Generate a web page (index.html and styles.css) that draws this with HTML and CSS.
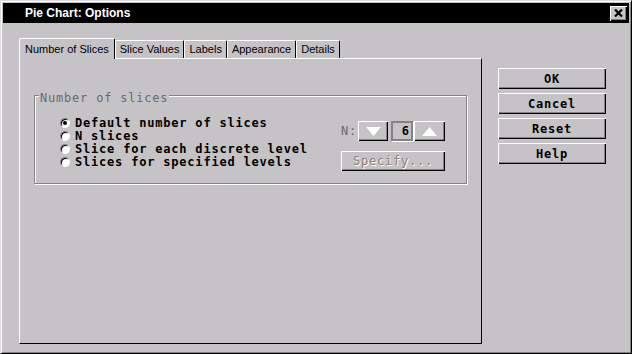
FILE: index.html
```html
<!DOCTYPE html>
<html>
<head>
<meta charset="utf-8">
<link rel="stylesheet" href="styles.css">
</head>
<body>
<div class="window">
  <div class="titlebar">
    <span class="title">Pie Chart: Options</span>
    <button class="close"><svg width="9" height="8" viewBox="0 0 9 8"><path d="M1 0.5 L8 7.5 M8 0.5 L1 7.5" stroke="#000" stroke-width="2.2"/></svg></button>
  </div>
  <div class="content">
    <div class="tabs-area">
      <div class="tabs">
        <div class="tab active">Number of Slices</div>
        <div class="tab">Slice Values</div>
        <div class="tab">Labels</div>
        <div class="tab">Appearance</div>
        <div class="tab">Details</div>
      </div>
      <div class="panel">
        <div class="group">
          <div class="group-title">Number of slices</div>
          <div class="radios">
            <div class="radio"><span class="dot checked"></span>Default number of slices</div>
            <div class="radio"><span class="dot"></span>N slices</div>
            <div class="radio"><span class="dot"></span>Slice for each discrete level</div>
            <div class="radio"><span class="dot"></span>Slices for specified levels</div>
          </div>
          <div class="controls">
            <div class="spin-row">
              <span class="n-label">N:</span>
              <button class="arrow down"><svg width="15" height="9" viewBox="0 0 15 9"><polygon points="0,0 15,0 7.5,9" fill="#fff"/></svg></button>
              <span class="field">6</span>
              <button class="arrow up"><svg width="15" height="9" viewBox="0 0 15 9"><polygon points="0,9 15,9 7.5,0" fill="#fff"/></svg></button>
            </div>
            <button class="specify">Specify...</button>
          </div>
        </div>
      </div>
    </div>
    <div class="actions">
      <button class="btn">OK</button>
      <button class="btn">Cancel</button>
      <button class="btn">Reset</button>
      <button class="btn">Help</button>
    </div>
  </div>
</div>
</body>
</html>
```
FILE: styles.css
```css
html, body {
  margin: 0;
  background: #c6c3c6;
}
.window {
  width: 632px;
  height: 354px;
  box-sizing: border-box;
  border: 1px solid;
  border-color: #dedbde #000 #000 #dedbde;
  box-shadow: inset 1px 1px #fff, inset -1px -1px #848284;
  padding: 2px;
  display: flex;
  flex-direction: column;
  background: #c6c3c6;
  font-family: "DejaVu Sans Mono", monospace;
}
.titlebar {
  height: 20px;
  flex: none;
  background: #000;
  display: flex;
  align-items: center;
  justify-content: space-between;
  padding: 0 2px 0 22px;
}
.title {
  color: #fff;
  font: bold 12px "Liberation Sans", Arial, sans-serif;
}
.close {
  width: 17px;
  height: 15px;
  padding: 0;
  border: 0;
  background: #c6c3c6;
  box-shadow: inset 1px 1px #fff, inset -1px -1px #000, inset -2px -2px #848284;
  display: flex;
  align-items: center;
  justify-content: center;
}
.content {
  display: flex;
  align-items: flex-start;
  flex: 1;
  padding: 15px 0 0 16px;
}
.tabs-area {
  width: 463px;
  display: flex;
  flex-direction: column;
}
.tabs {
  display: flex;
  height: 20px;
  align-items: flex-end;
}
.tab {
  height: 18px;
  box-sizing: border-box;
  padding: 0 4px;
  border-top: 1px solid #fff;
  border-left: 1px solid #fff;
  border-right: 1px solid #000;
  border-radius: 2px 2px 0 0;
  font: 11px "Liberation Sans", Arial, sans-serif;
  line-height: 16px;
  color: #000;
  white-space: nowrap;
}
.tab.active {
  height: 21px;
  margin-bottom: -1px;
  padding: 2px 5px 0 5px;
  position: relative;
  z-index: 1;
  background: #c6c3c6;
}
.panel {
  height: 286px;
  box-sizing: border-box;
  border: 1px solid;
  border-color: #fff #000 #000 #fff;
  padding: 36px 14px 0 14px;
}
.group {
  position: relative;
  width: 433px;
  height: 89px;
  box-sizing: border-box;
  border: 1px solid #848284;
  box-shadow: 1px 1px #fff, inset 1px 1px #fff;
  display: flex;
  justify-content: space-between;
  padding: 20px 21px 0 25px;
}
.group-title {
  position: absolute;
  top: -5px;
  left: 4px;
  padding: 0 1px;
  background: #c6c3c6;
  color: #6b696b;
  font-size: 12px;
  letter-spacing: 0.8px;
  line-height: 14px;
}
.radios {
  display: flex;
  flex-direction: column;
}
.radio {
  display: flex;
  align-items: center;
  height: 13px;
  font-weight: bold;
  font-size: 12px;
  letter-spacing: 0.8px;
  color: #000;
  white-space: nowrap;
}
.dot {
  width: 10px;
  height: 10px;
  box-sizing: border-box;
  border-radius: 50%;
  background: #fff;
  border: 1px solid;
  border-color: #848284 #fff #fff #848284;
  box-shadow: inset 1px 1px #000;
  margin-right: 5px;
  display: flex;
  align-items: center;
  justify-content: center;
}
.dot.checked::after {
  content: "";
  width: 4px;
  height: 4px;
  border-radius: 50%;
  background: #000;
}
.controls {
  display: flex;
  flex-direction: column;
  align-items: flex-end;
  gap: 10px;
  margin-top: 5px;
}
.spin-row {
  display: flex;
  align-items: center;
  height: 20px;
}
.n-label {
  color: #6b696b;
  font-size: 12px;
  letter-spacing: 0.8px;
  margin-right: 1px;
}
.arrow {
  height: 20px;
  padding: 0;
  border: 0;
  background: #c6c3c6;
  box-shadow: inset 1px 1px #fff, inset -1px -1px #000, inset -2px -2px #848284;
  display: flex;
  align-items: center;
  justify-content: center;
}
.arrow.down {
  width: 30px;
  margin-right: 3px;
}
.arrow.up {
  width: 31px;
  margin-left: 1px;
}
.field {
  width: 22px;
  height: 20px;
  box-sizing: border-box;
  border: 2px solid #848284;
  box-shadow: 1px 1px #fff;
  font-weight: bold;
  font-size: 12px;
  line-height: 16px;
  text-align: right;
  padding-right: 2px;
  color: #000;
}
.specify {
  width: 104px;
  height: 20px;
  padding: 0;
  border: 0;
  background: #c6c3c6;
  box-shadow: inset 1px 1px #fff, inset -1px -1px #000, inset -2px -2px #848284;
  font-family: "DejaVu Sans Mono", monospace;
  font-size: 12px;
  letter-spacing: 0.8px;
  color: #848284;
  text-shadow: 1px 1px #fff;
}
.actions {
  display: flex;
  flex-direction: column;
  gap: 4px;
  width: 108px;
  margin: 30px 0 0 16px;
}
.btn {
  height: 21px;
  padding: 0;
  border: 0;
  background: #c6c3c6;
  box-shadow: inset 1px 1px #fff, inset -1px -1px #000, inset -2px -2px #848284;
  font-family: "DejaVu Sans Mono", monospace;
  font-weight: bold;
  font-size: 12px;
  letter-spacing: 0.8px;
  color: #000;
}
```
